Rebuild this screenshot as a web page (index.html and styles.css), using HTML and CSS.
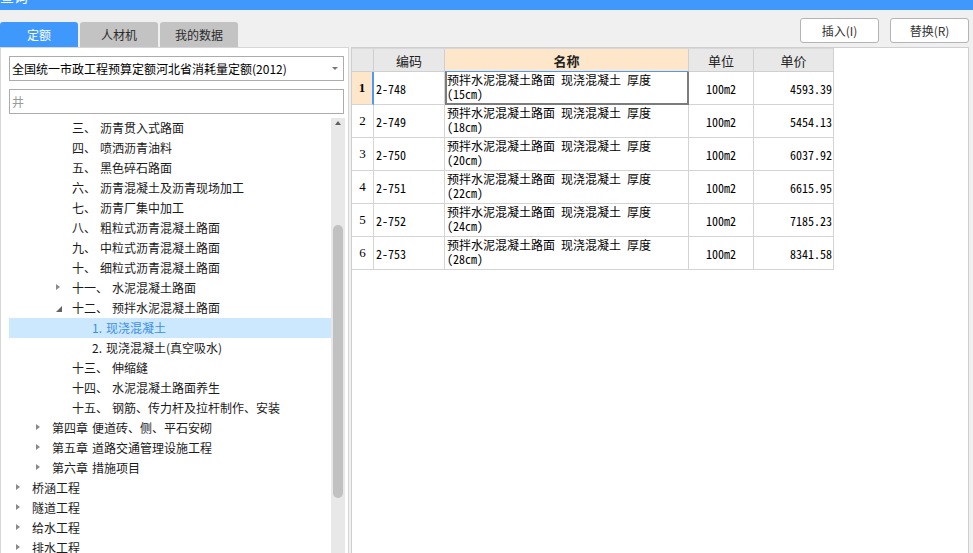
FILE: index.html
```html
<!DOCTYPE html>
<html lang="zh-CN">
<head>
<meta charset="utf-8">
<title>查询</title>
<link rel="stylesheet" href="styles.css">
</head>
<body>
<div class="titlebar"><span class="title">查询</span></div>
<div class="main">
  <div class="left">
    <div class="tabs">
      <div class="tab active">定额</div>
      <div class="tab">人材机</div>
      <div class="tab">我的数据</div>
    </div>
    <div class="left-panel">
      <div class="select"><span>全国统一市政工程预算定额河北省消耗量定额(2012)</span><span class="caret"></span></div>
      <div class="search">井</div>
      <div class="tree-wrap">
        <div class="tree">
          <div class="row l3"><span class="tg"></span><span class="num">三、</span>沥青贯入式路面</div>
          <div class="row l3"><span class="tg"></span><span class="num">四、</span>喷洒沥青油料</div>
          <div class="row l3"><span class="tg"></span><span class="num">五、</span>黑色碎石路面</div>
          <div class="row l3"><span class="tg"></span><span class="num">六、</span>沥青混凝土及沥青现场加工</div>
          <div class="row l3"><span class="tg"></span><span class="num">七、</span>沥青厂集中加工</div>
          <div class="row l3"><span class="tg"></span><span class="num">八、</span>粗粒式沥青混凝土路面</div>
          <div class="row l3"><span class="tg"></span><span class="num">九、</span>中粒式沥青混凝土路面</div>
          <div class="row l3"><span class="tg"></span><span class="num">十、</span>细粒式沥青混凝土路面</div>
          <div class="row l3"><span class="tg"><i class="closed"></i></span><span class="num">十一、</span>水泥混凝土路面</div>
          <div class="row l3"><span class="tg"><i class="open"></i></span><span class="num">十二、</span>预拌水泥混凝土路面</div>
          <div class="row l4 selected"><span class="tg"></span><span class="num">1.</span>现浇混凝土</div>
          <div class="row l4"><span class="tg"></span><span class="num">2.</span>现浇混凝土(真空吸水)</div>
          <div class="row l3"><span class="tg"></span><span class="num">十三、</span>伸缩缝</div>
          <div class="row l3"><span class="tg"></span><span class="num">十四、</span>水泥混凝土路面养生</div>
          <div class="row l3"><span class="tg"></span><span class="num">十五、</span>钢筋、传力杆及拉杆制作、安装</div>
          <div class="row l2"><span class="tg"><i class="closed"></i></span><span class="num">第四章</span>便道砖、侧、平石安砌</div>
          <div class="row l2"><span class="tg"><i class="closed"></i></span><span class="num">第五章</span>道路交通管理设施工程</div>
          <div class="row l2"><span class="tg"><i class="closed"></i></span><span class="num">第六章</span>措施项目</div>
          <div class="row l1"><span class="tg"><i class="closed"></i></span>桥涵工程</div>
          <div class="row l1"><span class="tg"><i class="closed"></i></span>隧道工程</div>
          <div class="row l1"><span class="tg"><i class="closed"></i></span>给水工程</div>
          <div class="row l1"><span class="tg"><i class="closed"></i></span>排水工程</div>
        </div>
        <div class="vscroll"><div class="up"></div><div class="thumb"></div></div>
      </div>
    </div>
  </div>
  <div class="right">
    <div class="toolbar">
      <button class="btn">插入(I)</button>
      <button class="btn">替换(R)</button>
    </div>
    <div class="right-panel">
      <div class="grid">
        <div class="hc"></div>
        <div class="hc">编码</div>
        <div class="hc name-h">名称</div>
        <div class="hc">单位</div>
        <div class="hc">单价</div>

        <div class="c rn cur">1</div>
        <div class="c code">2-748</div>
        <div class="c name focus">预拌水泥混凝土路面 现浇混凝土 厚度<br>(15cm)</div>
        <div class="c unit">100m2</div>
        <div class="c price">4593.39</div>

        <div class="c rn">2</div>
        <div class="c code">2-749</div>
        <div class="c name">预拌水泥混凝土路面 现浇混凝土 厚度<br>(18cm)</div>
        <div class="c unit">100m2</div>
        <div class="c price">5454.13</div>

        <div class="c rn">3</div>
        <div class="c code">2-750</div>
        <div class="c name">预拌水泥混凝土路面 现浇混凝土 厚度<br>(20cm)</div>
        <div class="c unit">100m2</div>
        <div class="c price">6037.92</div>

        <div class="c rn">4</div>
        <div class="c code">2-751</div>
        <div class="c name">预拌水泥混凝土路面 现浇混凝土 厚度<br>(22cm)</div>
        <div class="c unit">100m2</div>
        <div class="c price">6615.95</div>

        <div class="c rn">5</div>
        <div class="c code">2-752</div>
        <div class="c name">预拌水泥混凝土路面 现浇混凝土 厚度<br>(24cm)</div>
        <div class="c unit">100m2</div>
        <div class="c price">7185.23</div>

        <div class="c rn">6</div>
        <div class="c code">2-753</div>
        <div class="c name">预拌水泥混凝土路面 现浇混凝土 厚度<br>(28cm)</div>
        <div class="c unit">100m2</div>
        <div class="c price">8341.58</div>
      </div>
    </div>
  </div>
</div>
</body>
</html>
```
FILE: styles.css
```css
* { box-sizing: border-box; }
html, body { margin: 0; padding: 0; }
body {
  width: 973px;
  height: 553px;
  overflow: hidden;
  background: #f0f0f0;
  font-family: "Noto Sans CJK SC", "Noto Sans", sans-serif;
  font-size: 12px;
  color: #1a1a1a;
}
.titlebar {
  height: 10px;
  background: #3f99fc;
  overflow: hidden;
}
.title {
  display: block;
  margin-top: -14px;
  line-height: 20px;
  font-size: 14px;
  color: #fff;
}
.main {
  display: flex;
  gap: 2px;
  height: 543px;
}
.left {
  width: 349px;
  display: flex;
  flex-direction: column;
}
.tabs {
  display: flex;
  gap: 2px;
  margin-top: 12px;
  height: 25px;
}
.tab {
  width: 78px;
  height: 25px;
  line-height: 25px;
  text-align: center;
  background: #c3c3c3;
  color: #2a2a2a;
  border-radius: 3px 3px 0 0;
  font-size: 12px;
}
.tab.active {
  background: #3f99fc;
  color: #fff;
}
.left-panel {
  flex: 1;
  background: #fff;
  border: 1px solid #d6d6d6;
  border-bottom: none;
  padding: 8px 0 0 8px;
  display: flex;
  flex-direction: column;
  overflow: hidden;
}
.select {
  width: 335px;
  height: 25px;
  border: 1px solid #acacac;
  display: flex;
  align-items: center;
  justify-content: space-between;
  padding: 0 5px 0 2px;
  font-size: 12px;
  color: #000;
}
.caret {
  width: 0;
  height: 0;
  border-left: 3px solid transparent;
  border-right: 3px solid transparent;
  border-top: 3px solid #777;
}
.search {
  width: 335px;
  height: 25px;
  margin-top: 8px;
  border: 1px solid #acacac;
  padding-left: 2px;
  line-height: 23px;
  color: #9a9a9a;
  font-size: 12px;
}
.tree-wrap {
  margin-top: 4px;
  flex: 1;
  display: flex;
  overflow: hidden;
}
.tree {
  width: 322px;
}
.row {
  height: 20px;
  line-height: 20px;
  display: flex;
  align-items: center;
  white-space: nowrap;
  color: #1a1a1a;
}
.row.l1 { padding-left: 7px; }
.row.l2 { padding-left: 27px; }
.row.l3 { padding-left: 47px; }
.row.l4 { padding-left: 67px; }
.row.selected {
  background: #cce8ff;
  color: #3b8fe8;
}
.tg {
  width: 16px;
  height: 20px;
  flex: none;
  position: relative;
}
.tg .closed {
  position: absolute;
  left: 0;
  top: 6px;
  width: 0;
  height: 0;
  border-top: 3.5px solid transparent;
  border-bottom: 3.5px solid transparent;
  border-left: 4px solid #8a8a8a;
}
.tg .open {
  position: absolute;
  left: 0;
  top: 8px;
  width: 0;
  height: 0;
  border-left: 6px solid transparent;
  border-bottom: 6px solid #636363;
}
.num { margin-right: 4px; }
.vscroll {
  width: 14px;
  background: #e8e8e8;
  display: flex;
  flex-direction: column;
  align-items: center;
}
.up {
  margin-top: 3px;
  width: 0;
  height: 0;
  border-left: 3.5px solid transparent;
  border-right: 3.5px solid transparent;
  border-bottom: 4px solid #606060;
}
.thumb {
  margin-top: 100px;
  width: 10px;
  height: 273px;
  background: #c1c1c1;
  border-radius: 5px;
}
.right {
  width: 618px;
  display: flex;
  flex-direction: column;
}
.toolbar {
  display: flex;
  justify-content: flex-end;
  gap: 11px;
  margin-top: 8px;
  height: 25px;
}
.btn {
  width: 79px;
  height: 25px;
  background: #fff;
  border: 1px solid #b4b4b4;
  border-radius: 3px;
  font-family: "Noto Sans CJK SC", "Noto Sans", sans-serif;
  font-size: 12px;
  color: #333;
  padding: 0;
}
.right-panel {
  margin-top: 4px;
  flex: 1;
  background: #fff;
  border: 1px solid #cfcfcf;
  border-bottom: none;
}
.grid {
  display: grid;
  grid-template-columns: 22px 71px 244px 65px 80px;
  grid-template-rows: 23px repeat(6, 33px);
  width: 482px;
  border-top: 1px solid #d8d8d8;
}
.hc {
  background: #e8e8e8;
  border-right: 1px solid #cfcfcf;
  border-bottom: 1px solid #cfcfcf;
  display: flex;
  align-items: center;
  justify-content: center;
  font-size: 13px;
  color: #222;
}
.hc.name-h {
  background: #fde6c9;
  font-weight: bold;
  border-bottom-color: #4a9bf5;
}
.c {
  border-right: 1px solid #d4d4d4;
  border-bottom: 1px solid #d4d4d4;
  font-family: "Noto Sans Mono CJK SC", "Liberation Mono", "Noto Sans CJK SC", monospace;
  font-size: 12px;
  color: #000;
  display: flex;
  align-items: center;
}
.rn {
  justify-content: center;
  font-family: "Liberation Serif", "Noto Sans CJK SC", serif;
  font-size: 13px;
}
.rn.cur {
  background: #fde6c9;
  font-weight: bold;
  border-right: 2px solid #4a9bf5;
}
.code { padding-left: 2px; }
.name {
  display: block;
  padding: 1px 3px 0 2px;
  line-height: 14px;
}
.name.focus {
  box-shadow: inset 2px 0 #7c7c7c, inset -1px 0 #7c7c7c, inset 0 -1px #7c7c7c;
  border-right: 1px solid #7c7c7c;
  border-bottom: 1px solid #7c7c7c;
}
.unit { justify-content: center; }
.price { justify-content: flex-end; padding-right: 1px; }
```
